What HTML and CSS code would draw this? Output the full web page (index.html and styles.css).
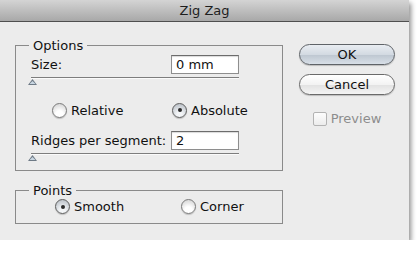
FILE: index.html
```html
<!DOCTYPE html>
<html lang="en">
<head>
  <meta charset="UTF-8">
  <title>Zig Zag</title>
  <link rel="stylesheet" href="styles.css">
</head>
<body class="page">
  <div class="window">
    <div class="window__title">Zig Zag</div>
    <form class="dialog">
      <div class="dialog__main">
        <fieldset class="group">
          <legend class="group__legend">Options</legend>
          <div class="field">
            <label class="field__label" for="size">Size:</label>
            <input class="field__input" id="size" type="text" value="0 mm">
          </div>
          <div class="slider"><span class="slider__thumb"></span></div>
          <div class="choices choices--options">
            <label class="radio"><span class="radio__dot"></span>Relative</label>
            <label class="radio"><span class="radio__dot radio__dot--on"></span>Absolute</label>
          </div>
          <div class="field field--ridges">
            <label class="field__label" for="ridges">Ridges per segment:</label>
            <input class="field__input" id="ridges" type="text" value="2">
          </div>
          <div class="slider slider--ridges"><span class="slider__thumb"></span></div>
        </fieldset>

        <fieldset class="group group--points">
          <legend class="group__legend">Points</legend>
          <div class="choices choices--points">
            <label class="radio"><span class="radio__dot radio__dot--on"></span>Smooth</label>
            <label class="radio"><span class="radio__dot"></span>Corner</label>
          </div>
        </fieldset>
      </div>

      <div class="dialog__side">
        <button class="button button--default" type="button">OK</button>
        <button class="button" type="button">Cancel</button>
        <label class="check"><span class="check__box"></span>Preview</label>
      </div>
    </form>
  </div>
</body>
</html>
```

FILE: styles.css
```css
*, *::before, *::after {
  box-sizing: border-box;
}

.page {
  margin: 0;
  background: #ffffff;
  font-family: "DejaVu Sans", sans-serif;
  font-size: 13px;
  color: #111;
}

.window {
  width: 409px;
  height: 240px;
  background: #ececec;
  box-shadow: 2px 3px 5px rgba(0, 0, 0, 0.45);
}

.window__title {
  height: 22px;
  line-height: 21px;
  text-align: center;
  color: #1e1e1e;
  background: linear-gradient(#d4d4d4, #a8a8a8);
  border-bottom: 1px solid #4f4f4f;
}

.dialog {
  display: flex;
  gap: 16px;
  padding: 16px 0 0 15px;
}

.dialog__main {
  width: 268px;
  display: flex;
  flex-direction: column;
  gap: 12px;
}

.group {
  margin: 0;
  padding: 0 43px 10px 15px;
  border: 1px solid #8a8a8a;
  min-width: 0;
}

.group__legend {
  margin-left: -2px;
  padding: 0 4px;
  line-height: 15px;
}

.group--points {
  padding-bottom: 8px;
}

.field {
  display: flex;
  justify-content: space-between;
  align-items: center;
  margin-top: 2px;
  height: 19px;
}

.field--ridges {
  margin-top: 13px;
}

.field__input {
  width: 68px;
  height: 19px;
  margin: 0;
  padding: 0 4px;
  border: 1px solid #8e8e8e;
  border-top-color: #6c6c6c;
  box-shadow: inset 0 1px 1px rgba(0, 0, 0, 0.15);
  background: #fff;
  font: inherit;
  color: #111;
}

.slider {
  position: relative;
  margin-top: 3px;
  height: 7px;
  border-top: 1px solid #7d7d7d;
  box-shadow: 0 1px 0 #fafafa inset;
}

.slider--ridges {
  margin-top: 3px;
}

/* the thumb sits on top of the track */
.slider__thumb {
  position: absolute;
  left: -3px;
  top: 1px;
  width: 9px;
  height: 6px;
  background: #6e7a86;
  clip-path: polygon(50% 0, 100% 100%, 0 100%);
}

.slider__thumb::after {
  content: "";
  position: absolute;
  left: 1.5px;
  top: 2px;
  width: 6px;
  height: 3px;
  background: #c9d6e2;
  clip-path: polygon(50% 0, 100% 100%, 0 100%);
}

.choices {
  display: grid;
  margin-top: 18px;
  height: 16px;
}

.choices--options {
  grid-template-columns: 120px auto;
  padding-left: 21px;
}

.choices--points {
  grid-template-columns: 126px auto;
  padding-left: 24px;
  margin-top: 0;
  height: 17px;
}

.radio {
  display: flex;
  align-items: center;
  gap: 4px;
  white-space: nowrap;
}

.radio__dot {
  width: 15px;
  height: 15px;
  border-radius: 50%;
  border: 1px solid #7a7a7a;
  background: radial-gradient(circle at 50% 80%, #ffffff 30%, #e2e2e2 70%, #cfcfcf);
  box-shadow: 0 1px 1px rgba(0, 0, 0, 0.2);
  display: flex;
  align-items: center;
  justify-content: center;
}

.radio__dot--on {
  background: radial-gradient(circle at 50% 80%, #f3f5f7 20%, #c9ced4 70%, #aeb4bb);
  border-color: #5e5e5e;
}

.radio__dot--on::after {
  content: "";
  width: 4px;
  height: 4px;
  border-radius: 50%;
  background: #2a2a2a;
}

.dialog__side {
  width: 96px;
  display: flex;
  flex-direction: column;
  padding-top: 6px;
}

.button {
  height: 21px;
  margin: 0 0 9px;
  padding: 0;
  border: 1px solid #6a6a6a;
  border-radius: 11px;
  background: linear-gradient(#ffffff, #f3f3f3 50%, #e3e3e3 55%, #f4f4f4);
  box-shadow: 0 1px 1px rgba(0, 0, 0, 0.2);
  font: inherit;
  color: #111;
  line-height: 19px;
}

.button--default {
  background: linear-gradient(#e9edf2, #d3dae2 50%, #bfc8d2 55%, #d8dfe7);
  border-color: #5f6368;
}

.check {
  display: flex;
  align-items: center;
  justify-content: center;
  gap: 4px;
  margin-top: 7px;
  color: #8d8d8d;
}

.check__box {
  width: 14px;
  height: 14px;
  border: 1px solid #b3b3b3;
  border-radius: 2px;
  background: linear-gradient(#fdfdfd, #ececec);
}
```
